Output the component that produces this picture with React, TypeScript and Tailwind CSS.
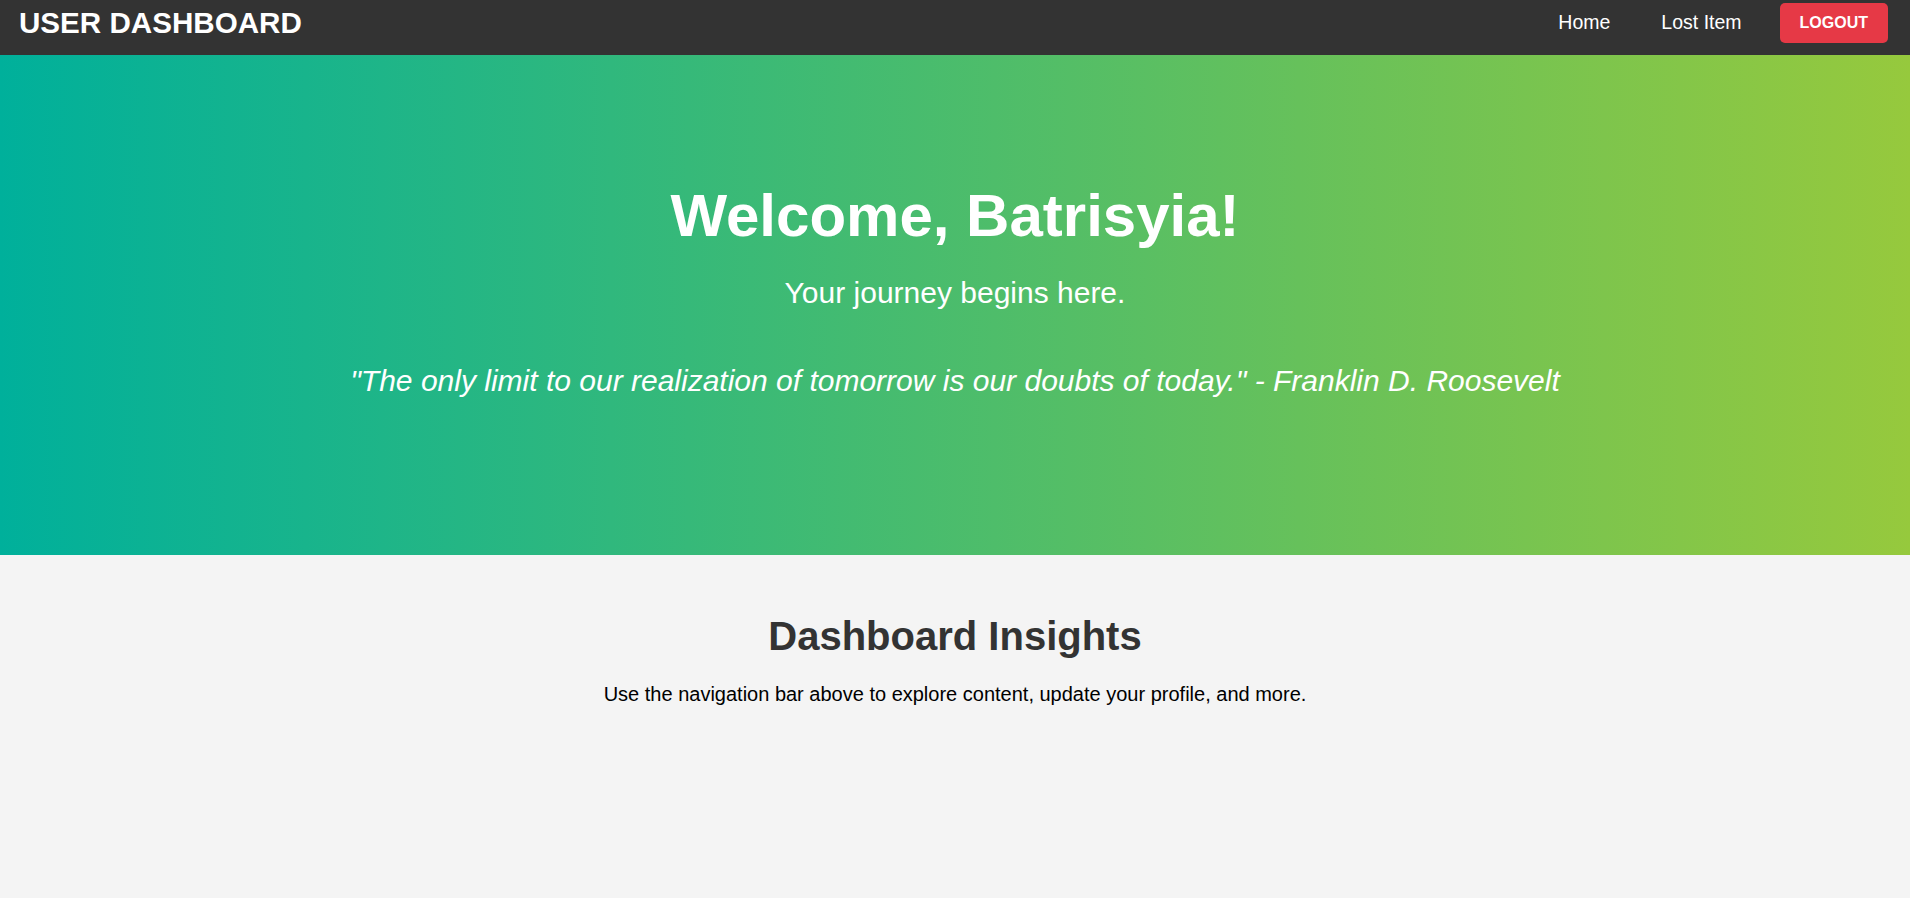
export default function App() {
  return (
    <div className="min-h-screen bg-[#f4f4f4] font-['Liberation_Sans',Arial,sans-serif]">
      {/* Top bar */}
      <nav className="h-[55px] bg-[#333333] pl-[19px] pr-[22px] pb-[10px] flex items-center justify-between">
        <h1 className="text-[29.6px] leading-none font-bold text-white">USER DASHBOARD</h1>
        <div className="flex items-center">
          <a href="#" className="text-[19.5px] leading-none text-white mr-[51px]">Home</a>
          <a href="#" className="text-[19.5px] leading-none text-white mr-[38px]">Lost Item</a>
          <button className="h-10 px-5 rounded-[5px] bg-[#e63946] text-white text-[16px] font-bold leading-none">
            LOGOUT
          </button>
        </div>
      </nav>

      {/* Hero */}
      <header className="h-[500px] bg-linear-to-r/srgb from-[#00b09b] to-[#96c93d] pt-[131px] text-center text-white">
        <h2 className="text-[60px] leading-none font-bold">Welcome, Batrisyia!</h2>
        <p className="mt-[32px] text-[30px] leading-none">Your journey begins here.</p>
        <p className="mt-[58px] text-[30px] leading-none italic">
          "The only limit to our realization of tomorrow is our doubts of today." - Franklin D. Roosevelt
        </p>
      </header>

      {/* Insights */}
      <section className="pt-[61px] text-center">
        <h3 className="text-[40px] leading-none font-bold text-[#333333]">Dashboard Insights</h3>
        <p className="mt-[28px] text-[20px] leading-none text-black">
          Use the navigation bar above to explore content, update your profile, and more.
        </p>
      </section>
    </div>
  );
}
